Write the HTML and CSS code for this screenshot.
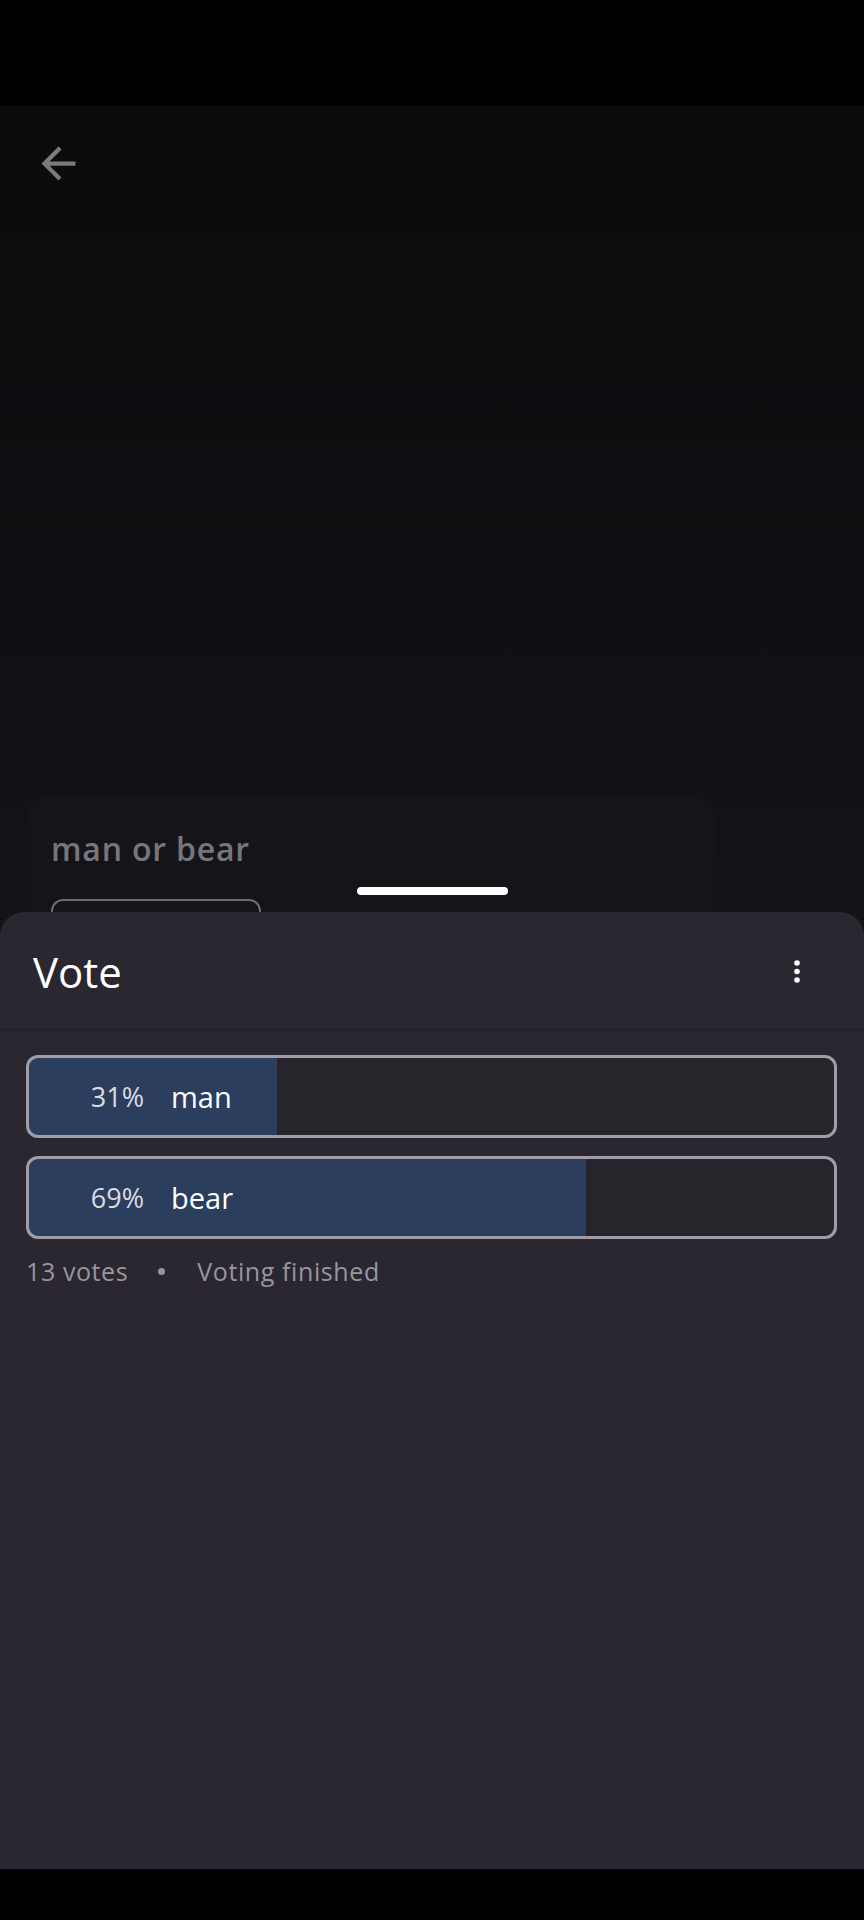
FILE: index.html
```html
<!DOCTYPE html>
<html lang="en">
  <head>
    <meta charset="UTF-8" />
    <title>Vote</title>
    <link rel="stylesheet" href="styles.css">
  </head>
  <body>
    <div class="phone">
      <div class="status-bar"></div>

      <!-- Poll screen behind the sheet -->
      <div class="screen">
        <div class="toolbar">
          <svg class="back" viewBox="0 0 24 24" width="51" height="51">
            <path d="M20 11H7.83l5.59-5.59L12 4l-8 8 8 8 1.41-1.41L7.83 13H20v-2z" fill="#7b7b7d" />
          </svg>
        </div>
        <div class="poll-card">
          <div class="poll-title">man or bear</div>
          <div class="poll-button"></div>
        </div>
      </div>

      <div class="nav-bar"></div>

      <!-- Bottom sheet -->
      <div class="sheet-layer">
        <div class="handle"></div>
        <div class="sheet">
          <div class="sheet-header">
            <h1>Vote</h1>
            <svg class="more" viewBox="0 0 12 28" width="12" height="28">
              <circle cx="6" cy="5" r="2.8" fill="#fff" />
              <circle cx="6" cy="13.5" r="2.8" fill="#fff" />
              <circle cx="6" cy="22" r="2.8" fill="#fff" />
            </svg>
          </div>
          <div class="sheet-body">
            <!-- 4 of 13 votes -->
            <div class="option" style="--p: 30.77%">
              <span class="percent">31%</span>
              <span class="label">man</span>
            </div>
            <!-- 9 of 13 votes -->
            <div class="option" style="--p: 69.23%">
              <span class="percent">69%</span>
              <span class="label">bear</span>
            </div>
            <div class="summary">
              <span>13 votes</span>
              <span class="dot"></span>
              <span>Voting finished</span>
            </div>
          </div>
        </div>
      </div>
    </div>
  </body>
</html>
```

FILE: styles.css
```css
body {
  margin: 0;
  background: #000;
  font-family: "Open Sans", Arial, sans-serif;
}
.phone {
  position: relative;
  width: 864px;
  height: 1920px;
  display: flex;
  flex-direction: column;
  overflow: hidden;
}
.status-bar {
  height: 106px;
  background: #000;
}
.screen {
  flex: 1;
  overflow: hidden;
  background: linear-gradient(#0b0b0d 0, #131318 806px);
}
.nav-bar {
  height: 51px;
  background: #000;
}
.toolbar {
  padding: 32px 0 0 33px;
  height: 51px;
}
.back {
  display: block;
}
.poll-card {
  margin: 608px 0 0 26px;
  width: 689px;
  height: 300px;
  background: #151519;
  border-radius: 22px;
  padding: 30px 25px;
  box-sizing: border-box;
}
.poll-title {
  font-size: 32px;
  line-height: 44px;
  font-weight: 600;
  letter-spacing: 0.8px;
  color: #77767b;
}
.poll-button {
  margin-top: 28px;
  width: 210px;
  height: 70px;
  box-sizing: border-box;
  border: 2px solid #6d6c72;
  border-radius: 12px;
}
.sheet-layer {
  position: absolute;
  top: 887px;
  left: 0;
  right: 0;
  bottom: 51px;
  display: flex;
  flex-direction: column;
  align-items: center;
}
.handle {
  width: 151px;
  height: 8px;
  border-radius: 4px;
  background: #fff;
}
.sheet {
  margin-top: 17px;
  align-self: stretch;
  flex: 1;
  background: #2a2731;
  border-radius: 24px 24px 0 0;
}
.sheet-header {
  height: 118px;
  box-sizing: border-box;
  padding: 31px 61px 0 33px;
  display: flex;
  justify-content: space-between;
  align-items: flex-start;
  border-bottom: 2px solid #25222a;
  box-shadow: 0 1px 2px rgba(0, 0, 0, 0.1);
}
.sheet-header h1 {
  margin: 0;
  font-size: 42px;
  line-height: 58px;
  font-weight: 400;
  color: #fff;
}
.more {
  margin-top: 15px;
}
.sheet-body {
  padding: 25px 27px 0 26px;
  display: flex;
  flex-direction: column;
  gap: 18px;
}
.option {
  height: 83px;
  box-sizing: border-box;
  border: 3px solid #a09da6;
  border-radius: 12px;
  background: linear-gradient(to right, #2c3e5d var(--p), #27242b var(--p));
  display: flex;
  align-items: center;
}
.percent {
  width: 115px;
  text-align: right;
  font-size: 27px;
  color: #dcdbe0;
}
.label {
  margin-left: 27px;
  font-size: 29px;
  color: #fff;
}
.summary {
  margin-top: -3px;
  display: flex;
  align-items: center;
  font-size: 25px;
  line-height: 34px;
  letter-spacing: 0.6px;
  color: #98959e;
}
.dot {
  width: 7px;
  height: 7px;
  border-radius: 50%;
  background: #98959e;
  margin: 0 32px 0 30px;
}
```
